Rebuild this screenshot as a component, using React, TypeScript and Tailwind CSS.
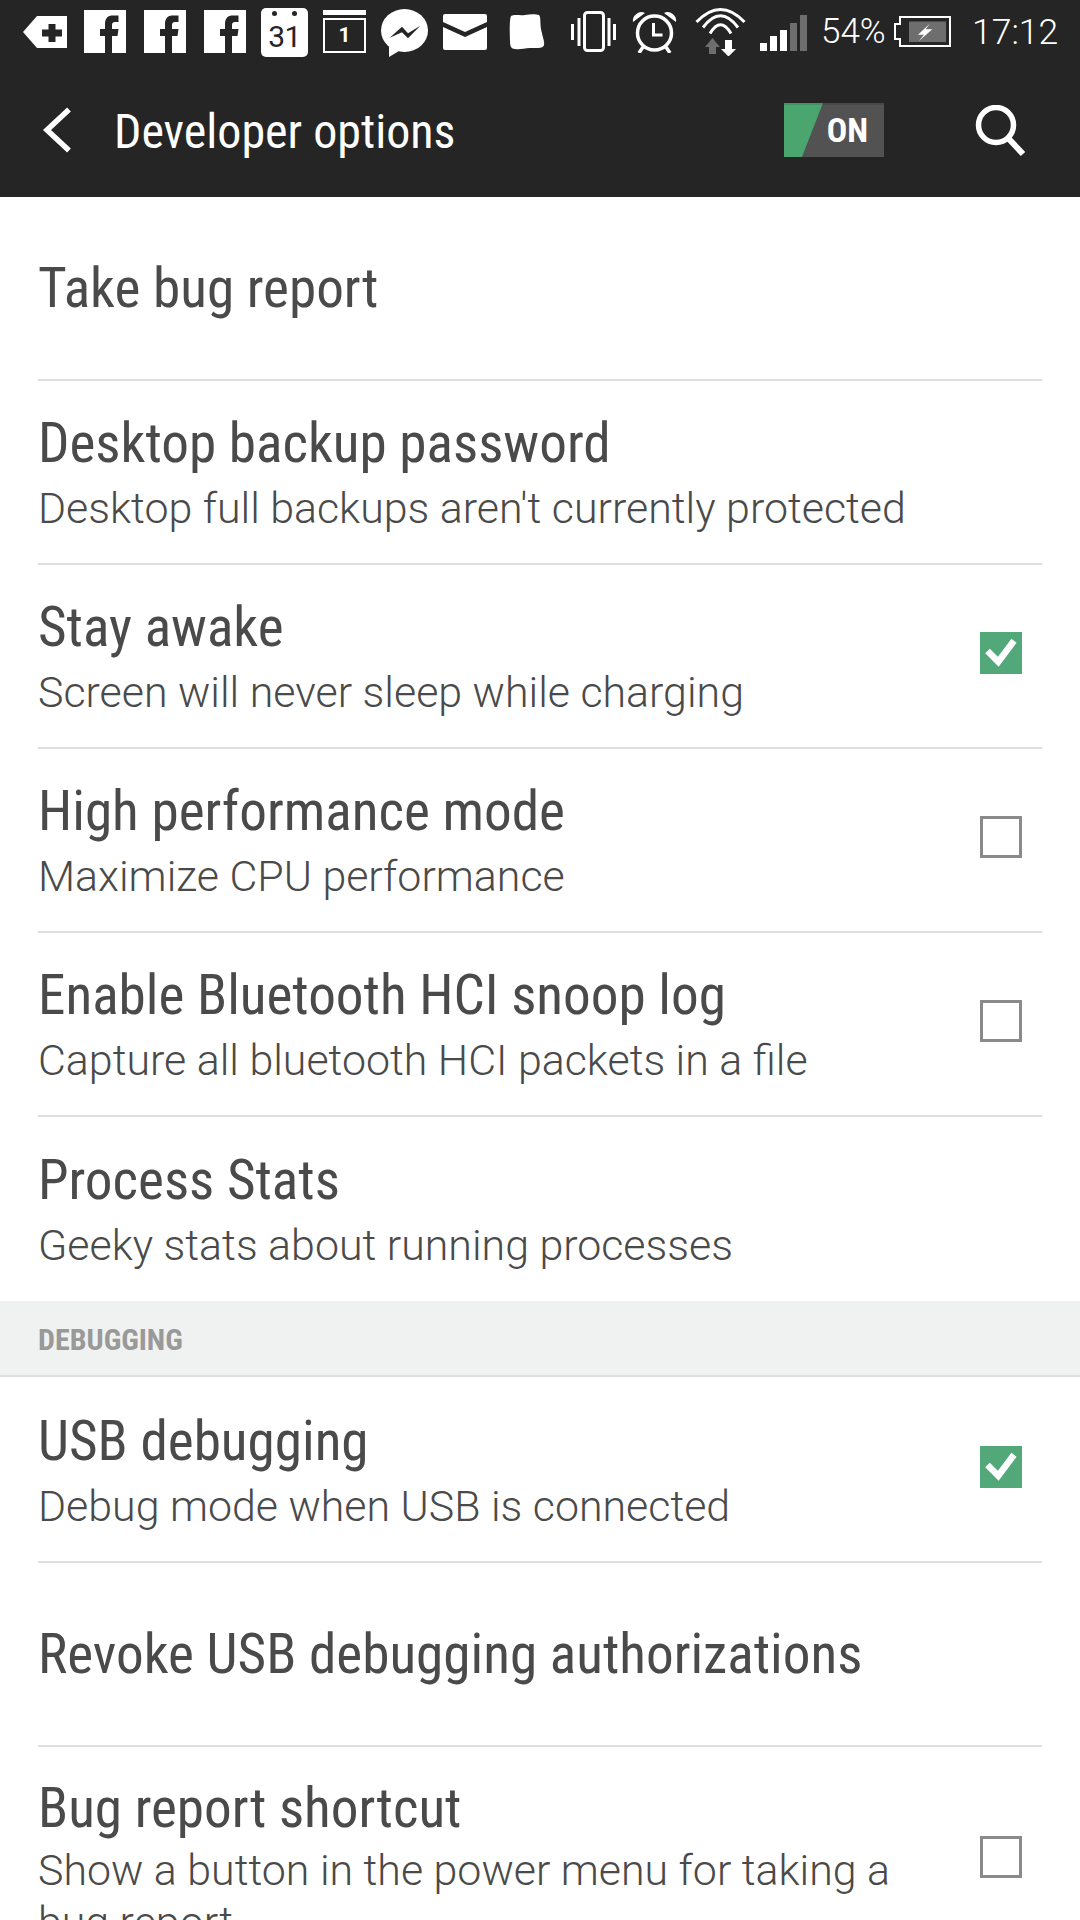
const condensed = "font-['Roboto',sans-serif] [font-stretch:75%]";
const dark = '#252525';

function FbIcon({ className }: { className: string }) {
  return (
    <svg viewBox="0 0 42 43" className={`h-[43px] w-[42px] ${className}`}>
      <rect width="42" height="43" fill="#fff" />
      <path d="M21 43V26h-5v-7h5v-5c0-6 3-8.500 8-8.500h5.500V12H31c-2 0-3 1-3 3v4h6.500l-1 7H28v17z" fill={dark} />
    </svg>
  );
}

function StatusBar() {
  return (
    <div className="flex h-[63px] items-center bg-[#252525] text-white">
      <svg viewBox="0 0 44 32" className="ml-[23px] h-[32px] w-[44px]">
        <path d="M0 16 14 0h30v32H14z" fill="#fff" />
        <path d="M25.500 8h7v5.500H39v7h-6.500V26h-7v-5.500H19v-7h6.500z" fill={dark} />
      </svg>
      <FbIcon className="ml-[17px]" />
      <FbIcon className="ml-[18px]" />
      <FbIcon className="ml-[18px]" />
      <div className="ml-[15px] mt-[2px] flex h-[49px] w-[47px] flex-col items-center rounded-[5px] bg-white text-[#252525]">
        <div className="mt-[3px] flex h-[5px] gap-[15px]">
          <span className="h-[5px] w-[5px] rounded-full bg-[#252525]" />
          <span className="h-[5px] w-[5px] rounded-full bg-[#252525]" />
        </div>
        <span className="font-['Roboto',sans-serif] text-[30px] leading-[42px] tracking-[-0.5px]">31</span>
      </div>
      <div className="ml-[15px] flex h-[43px] w-[43px] flex-col">
        <div className="h-[6px] bg-white" />
        <div className="mt-[3px] flex flex-1 items-center justify-center border-2 border-white font-['Roboto',sans-serif] text-[21px] font-bold">
          1
        </div>
      </div>
      <svg viewBox="0 0 47 48" className="ml-[15px] mt-[3px] h-[48px] w-[47px]">
        <ellipse cx="23.500" cy="21.500" rx="23.500" ry="21.500" fill="#fff" />
        <path d="M8 36v12l10-6z" fill="#fff" />
        <path d="M8.700 28.700 21 17.700l6 6.600 12.300-7.600L27 29.300l-6-6z" fill={dark} />
      </svg>
      <svg viewBox="0 0 44 36" className="ml-[15px] h-[36px] w-[44px]">
        <path d="M2 0h40a2 2 0 0 1 2 2v6L22 18 0 8V2a2 2 0 0 1 2-2z" fill="#fff" />
        <path d="M0 13l22 10 22-10v21a2 2 0 0 1-2 2H2a2 2 0 0 1-2-2z" fill="#fff" />
      </svg>
      <svg viewBox="0 0 38 36" className="ml-[20px] h-[36px] w-[38px]">
        <path d="M4 2c4-2 9 0 14-1s11-1 14 0c2 2 1 8 2 14s4 13 3 16c-1 4-8 3-14 3s-10 2-15 1c-4 0-5-3-5-8S2 6 4 2z" fill="#fff" />
      </svg>
      <svg viewBox="0 0 45 41" className="ml-[26px] h-[41px] w-[45px]">
        <rect x="13.500" y="1.500" width="19" height="38" rx="3" fill="none" stroke="#fff" strokeWidth="3" />
        <path d="M1.500 13v16M8 7v28M38 7v28M43.500 13v16" stroke="#fff" strokeWidth="3" />
      </svg>
      <svg viewBox="0 0 45 43" className="ml-[16px] h-[43px] w-[45px]">
        <circle cx="22.500" cy="23" r="17" fill="none" stroke="#fff" strokeWidth="3.500" />
        <path d="M21.500 13v12h9" fill="none" stroke="#fff" strokeWidth="3" />
        <path d="M1 12a8.500 8.500 0 0 1 12-9zM44 12a8.500 8.500 0 0 0-12-9z" fill="#fff" />
        <path d="M11 37l-4 6M34 37l4 6" stroke="#fff" strokeWidth="3.500" />
      </svg>
      <svg viewBox="0 0 51 48" className="ml-[18px] h-[48px] w-[51px]">
        <path d="M1.500 14Q25.500-11 49.500 14M8 19.500Q25.500-4 43 19.500M15 25.500Q25.500 8 36 25.500" fill="none" stroke="#fff" strokeWidth="3" />
        <path d="M17.500 30 25 39h-4v7h-7v-7h-4z" fill="#6e6e6e" />
        <path d="M30 32h7v9h4l-7.500 7.500L26 41h4z" fill="#fff" />
      </svg>
      <svg viewBox="0 0 47 36" className="ml-[14px] mt-[3px] h-[36px] w-[47px]">
        <rect x="0" y="28" width="7" height="8" fill="#fff" />
        <rect x="10" y="21" width="7" height="15" fill="#fff" />
        <rect x="20" y="15" width="7" height="21" fill="#fff" />
        <rect x="30" y="8" width="7" height="28" fill="#6e6e6e" />
        <rect x="40" y="0" width="7" height="36" fill="#6e6e6e" />
      </svg>
      <span className="ml-[14px] mt-[2px] w-[63px] whitespace-nowrap font-['Roboto',sans-serif] text-[35px] font-light">54%</span>
      <svg viewBox="0 0 57 31" className="ml-[10px] h-[31px] w-[57px]">
        <path d="M6 8V1h50v29H6v-7H1V8z" fill="none" stroke="#fff" strokeWidth="2" />
        <rect x="15" y="5.500" width="37" height="20.500" fill="#6e6e6e" />
        <path d="M35.700 7.700 24 18.700h6l-5.300 6.600 13.600-12h-6.600z" fill="#fff" />
      </svg>
      <span className="ml-[21px] mt-[2px] font-['Roboto',sans-serif] text-[35.500px] font-light">17:12</span>
    </div>
  );
}

function Toolbar() {
  return (
    <div className="flex h-[134px] items-center bg-[#252525] text-white">
      <svg viewBox="0 0 30 46" className="ml-[42px] h-[46px] w-[30px]">
        <path d="M27 2.500 5 23l22 20.500" fill="none" stroke="#fff" strokeWidth="5.500" />
      </svg>
      <span className={`ml-[42px] mt-[4px] text-[48px] font-normal ${condensed}`}>Developer options</span>
      <div className="relative ml-auto h-[54px] w-[100px] overflow-hidden bg-[#525252]">
        <div className="absolute left-0 top-0 h-full w-[39px] bg-[#4ba56f] [clip-path:polygon(0_0,100%_0,46%_100%,0_100%)]" />
        <div className="absolute left-0 top-0 h-[2px] w-full bg-black/10" />
        <span className={`absolute right-[16px] top-[4px] text-[34px] font-bold leading-[46px] ${condensed}`}>ON</span>
      </div>
      <svg viewBox="0 0 51 51" className="ml-[91px] mr-[54px] h-[51px] w-[51px]">
        <circle cx="21" cy="20" r="17.500" fill="none" stroke="#fff" strokeWidth="5.500" />
        <path d="M33 33 48 49" fill="none" stroke="#fff" strokeWidth="6" />
      </svg>
    </div>
  );
}

function Box({ on, className }: { on: boolean; className: string }) {
  if (on) {
    return (
      <div className={`h-[42px] w-[42px] shrink-0 bg-[#52a878] ${className}`}>
        <svg viewBox="0 0 42 42" className="h-[42px] w-[42px]">
          <path d="M7.500 19 18.300 29.700 34 8.700" fill="none" stroke="#fff" strokeWidth="6.500" />
        </svg>
      </div>
    );
  }
  return <div className={`h-[42px] w-[42px] shrink-0 border-[3px] border-[#8a8a8a] ${className}`} />;
}

interface RowProps {
  title: string;
  sub?: string;
  box?: 'on' | 'off';
  last?: boolean;
  size?: string;
  boxClass?: string;
  subLeading?: string;
}

function Row({ title, sub, box, last, size = 'h-[184px]', boxClass = 'mb-[6px]', subLeading = 'leading-[58px]' }: RowProps) {
  return (
    <div className={`flex items-center pr-[20px] ${size} ${last ? '' : 'border-b-2 border-[#dedede]'}`}>
      <div className="flex min-w-0 flex-1 flex-col pr-[24px]">
        <div className={`text-[55.200px] leading-[72px] text-[#4a4a4a] ${condensed}`}>{title}</div>
        {sub && <div className={`font-['Roboto',sans-serif] text-[42.900px] font-light text-[#4a4a4a] ${subLeading}`}>{sub}</div>}
      </div>
      {box && <Box on={box === 'on'} className={boxClass} />}
    </div>
  );
}

export default function App() {
  return (
    <div className="h-[1920px] w-[1080px] overflow-hidden bg-white">
      <StatusBar />
      <Toolbar />
      <div className="mx-[38px]">
        <Row title="Take bug report" />
        <Row title="Desktop backup password" sub="Desktop full backups aren't currently protected" />
        <Row title="Stay awake" sub="Screen will never sleep while charging" box="on" />
        <Row title="High performance mode" sub="Maximize CPU performance" box="off" />
        <Row title="Enable Bluetooth HCI snoop log" sub="Capture all bluetooth HCI packets in a file" box="off" />
        <Row title="Process Stats" sub="Geeky stats about running processes" last />
      </div>
      <div className="flex h-[76px] items-center border-b-2 border-[#dedede] bg-[#f0f2f1] pl-[38px]">
        <span className={`mt-[2px] text-[30px] font-bold text-[#999999] ${condensed}`}>DEBUGGING</span>
      </div>
      <div className="mx-[38px]">
        <Row title="USB debugging" sub="Debug mode when USB is connected" box="on" size="h-[186px] pt-[2px]" boxClass="mb-[6px]" />
        <Row title="Revoke USB debugging authorizations" />
        <Row
          title="Bug report shortcut"
          sub="Show a button in the power menu for taking a bug report"
          box="off"
          last
          size="pt-[25px] pb-[9px]"
          subLeading="leading-[52px]"
        />
      </div>
    </div>
  );
}
